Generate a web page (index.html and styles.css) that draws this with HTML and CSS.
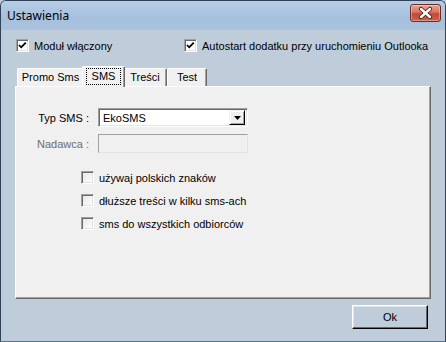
FILE: index.html
```html
<!DOCTYPE html>
<html lang="pl">
<head>
    <meta charset="UTF-8">
    <meta name="viewport" content="width=device-width, initial-scale=1.0">
    <title>Ustawienia</title>
    <link rel="stylesheet" href="styles.css">
</head>
<body>
    <div class="window">
        <div class="titlebar">
            <span class="title">Ustawienia</span>
            <span class="close">
                <svg width="31" height="18" viewBox="0 0 31 18">
                    <path d="M11 5 L20 13 M20 5 L11 13" stroke="#5a1d16" stroke-width="4.2" stroke-linecap="round"/>
                    <path d="M11 5 L20 13 M20 5 L11 13" stroke="#ffffff" stroke-width="2.4" stroke-linecap="round"/>
                </svg>
            </span>
        </div>

        <div class="client">
            <div class="top-checks">
                <label class="check check-main">
                    <span class="box"><svg width="11" height="11" viewBox="0 0 11 11"><path d="M2 5 L4.2 7.3 L8.8 2.6" fill="none" stroke="#000" stroke-width="1.8"/></svg></span>
                    Moduł włączony
                </label>
                <label class="check">
                    <span class="box"><svg width="11" height="11" viewBox="0 0 11 11"><path d="M2 5 L4.2 7.3 L8.8 2.6" fill="none" stroke="#000" stroke-width="1.8"/></svg></span>
                    Autostart dodatku przy uruchomieniu Outlooka
                </label>
            </div>

            <div class="tabs">
                <div class="tab tab-promo">Promo Sms</div>
                <div class="tab tab-sms active"><span class="focus">SMS</span></div>
                <div class="tab tab-tresci">Treści</div>
                <div class="tab tab-test">Test</div>
            </div>

            <div class="panel">
                <div class="form">
                    <span class="label">Typ SMS :</span>
                    <div class="combo">
                        <span class="combo-text">EkoSMS</span>
                        <span class="combo-btn"><svg width="7" height="4" viewBox="0 0 7 4"><path d="M0 0 H7 L3.5 4 Z" fill="#000"/></svg></span>
                    </div>
                    <span class="label disabled">Nadawca :</span>
                    <div class="textbox"></div>
                </div>

                <div class="options">
                    <label class="check"><span class="box"></span>używaj polskich znaków</label>
                    <label class="check"><span class="box"></span>dłuższe treści w kilku sms-ach</label>
                    <label class="check"><span class="box"></span>sms do wszystkich odbiorców</label>
                </div>
            </div>

            <div class="footer">
                <button class="btn">Ok</button>
            </div>
        </div>
    </div>
</body>
</html>
```

FILE: styles.css
```css
body {
    margin: 0;
    font-family: "Liberation Sans", Arial, sans-serif;
    font-size: 11px;
    color: #000;
    background-color: #bfcddb;
}
.window {
    width: 446px;
    height: 342px;
    box-sizing: border-box;
    border: 1px solid #2f4256;
    border-bottom-color: #3d7ca3;
    border-radius: 6px 6px 0 0;
    background-color: #bfcddb;
    overflow: hidden;
}
.titlebar {
    height: 29px;
    display: flex;
    justify-content: space-between;
    align-items: flex-start;
    padding: 3px 4px 0 6px;
    box-sizing: border-box;
    background: linear-gradient(#b6cce6, #a6c0dd 60%, #aac2dc);
}
.title {
    align-self: center;
    font-family: "Noto Sans", "Open Sans", sans-serif;
    font-size: 12px;
    color: #000;
    margin-top: -3px;
}
.close {
    width: 31px;
    height: 18px;
    box-sizing: border-box;
    border: 1px solid #6e2b24;
    border-radius: 3px;
    background: linear-gradient(#e6a597, #d5745f 45%, #c04a36 55%, #c9624a);
    box-shadow: inset 0 0 0 1px rgba(255,255,255,0.35);
    display: flex;
    align-items: center;
    justify-content: center;
}
.close svg {
    margin: -1px;
}
.client {
    padding: 9px 14px 0 14px;
}
.top-checks {
    display: flex;
    align-items: center;
    height: 13px;
    padding-left: 1px;
}
.check {
    display: flex;
    align-items: center;
    gap: 5px;
    height: 13px;
    white-space: nowrap;
}
.check-main {
    width: 168px;
}
.box {
    width: 13px;
    height: 13px;
    box-sizing: border-box;
    flex: none;
    background: linear-gradient(135deg, #e6e6e6, #ffffff);
    border: 1px solid;
    border-color: #a0a0a0 #ffffff #ffffff #a0a0a0;
    box-shadow: inset 1px 1px #696969, inset -1px -1px #e3e3e3;
    display: flex;
    align-items: center;
    justify-content: center;
}
.top-checks .box {
    background: #fff;
}
.tabs {
    display: flex;
    align-items: flex-end;
    height: 20px;
    margin-top: 14px;
    padding-left: 2px;
    position: relative;
    z-index: 1;
}
.tab {
    height: 18px;
    box-sizing: border-box;
    border-left: 1px solid #fff;
    border-top: 1px solid #fff;
    border-right: 1px solid #696969;
    border-radius: 2px 2px 0 0;
    box-shadow: inset -1px 0 #a0a0a0;
    background-color: #f0f0f0;
    line-height: 16px;
    text-align: center;
}
.tab-promo {
    width: 67px;
}
.tab-sms {
    width: 43px;
}
.tab-tresci {
    width: 44px;
}
.tab-test {
    width: 40px;
}
.tab.active {
    height: 21px;
    margin: 0 -2px -1px -2px;
    padding-top: 1px;
    position: relative;
    z-index: 2;
}
.focus {
    display: inline-block;
    outline: 1px dotted #000;
    line-height: 15px;
    padding: 0 5px;
}
.panel {
    height: 213px;
    box-sizing: border-box;
    border: 1px solid;
    border-color: #fff #696969 #696969 #fff;
    box-shadow: inset -1px -1px #a0a0a0;
    background-color: #f0f0f0;
    padding-top: 21px;
}
.form {
    display: grid;
    grid-template-columns: 75px 150px;
    grid-auto-rows: 19px;
    column-gap: 7px;
    row-gap: 7px;
    align-items: center;
}
.label {
    text-align: right;
    padding-right: 2px;
}
.label.disabled {
    color: #6d6d6d;
}
.combo, .textbox {
    height: 19px;
    box-sizing: border-box;
    border: 1px solid;
    border-color: #a0a0a0 #ffffff #ffffff #a0a0a0;
    box-shadow: inset 1px 1px #696969, inset -1px -1px #e3e3e3;
}
.combo {
    display: flex;
    align-items: center;
    background-color: #fff;
    padding: 2px 2px 2px 4px;
}
.combo-text {
    flex: 1;
}
.combo-btn {
    width: 16px;
    height: 15px;
    box-sizing: border-box;
    border: 1px solid;
    border-color: #f0f0f0 #000 #000 #f0f0f0;
    box-shadow: inset 1px 1px #fff, inset -1px -1px #a0a0a0;
    background-color: #f0f0f0;
    display: flex;
    align-items: center;
    justify-content: center;
}
.textbox {
    background-color: #f0f0f0;
    border-color: #a0a0a0 #e3e3e3 #e3e3e3 #a0a0a0;
    box-shadow: none;
}
.options {
    display: flex;
    flex-direction: column;
    gap: 10px;
    margin-top: 18px;
    padding-left: 65px;
}
.footer {
    display: flex;
    justify-content: flex-end;
    margin-top: 6px;
    padding-right: 3px;
}
.btn {
    width: 76px;
    height: 24px;
    box-sizing: border-box;
    font-family: "Liberation Sans", Arial, sans-serif;
    font-size: 11px;
    color: #000;
    background-color: #bfcddb;
    border: 1px solid;
    border-color: #fff #000 #000 #fff;
    box-shadow: inset -1px -1px #696969, inset 1px 1px #e3e3e3;
    padding: 0;
}
```
